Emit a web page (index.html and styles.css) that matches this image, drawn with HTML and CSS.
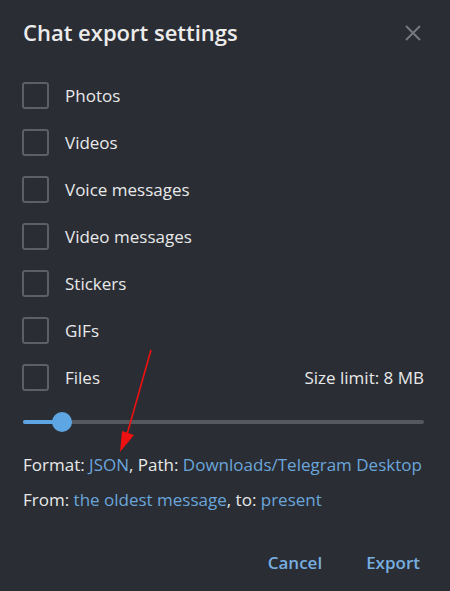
FILE: index.html
```html
<!DOCTYPE html>
<html>
<head>
<meta charset="utf-8">
<link rel="stylesheet" href="styles.css">
</head>
<body>
<div class="dialog">
  <div class="header">
    <div class="title">Chat export settings</div>
    <svg class="close" width="16" height="16" viewBox="0 0 16 16"><path d="M1 1L15 15M15 1L1 15" stroke="#75787d" stroke-width="2" fill="none"/></svg>
  </div>
  <div class="list">
    <div class="row"><span class="box"></span><span class="label">Photos</span></div>
    <div class="row"><span class="box"></span><span class="label">Videos</span></div>
    <div class="row"><span class="box"></span><span class="label">Voice messages</span></div>
    <div class="row"><span class="box"></span><span class="label">Video messages</span></div>
    <div class="row"><span class="box"></span><span class="label">Stickers</span></div>
    <div class="row"><span class="box"></span><span class="label">GIFs</span></div>
    <div class="row"><span class="box"></span><span class="label">Files</span><span class="limit">Size limit: 8 MB</span></div>
  </div>
  <div class="slider">
    <div class="track"><div class="fill"></div><div class="thumb"></div></div>
  </div>
  <div class="info first">Format: <span class="link">JSON</span>, Path: <span class="link">Downloads/Telegram Desktop</span></div>
  <div class="info">From: <span class="link">the oldest message</span>, to: <span class="link">present</span></div>
  <div class="buttons">
    <span class="btn">Cancel</span>
    <span class="btn">Export</span>
  </div>
  <svg class="arrow" width="450" height="591" viewBox="0 0 450 591">
    <line x1="151" y1="350" x2="126" y2="438" stroke="#ee1111" stroke-width="1.6"/>
    <polygon points="122,431 134,435 120,452" fill="#ee1111"/>
  </svg>
</div>
</body>
</html>
```
FILE: styles.css
```css
html, body {
  margin: 0;
  padding: 0;
  background: #2a2d33;
}
.dialog {
  position: relative;
  width: 450px;
  height: 591px;
  background: #2a2d33;
  font-family: "Open Sans", sans-serif;
  color: #e8e9ea;
  font-size: 17px;
  box-sizing: border-box;
  padding: 0 26px 0 22px;
}
.header {
  height: 72px;
  display: flex;
  align-items: flex-start;
  justify-content: space-between;
}
.title {
  font-size: 22px;
  font-weight: 600;
  margin-top: 17px;
  line-height: 30px;
  padding-left: 1px;
  color: #ececec;
}
.close {
  margin-top: 25px;
  margin-right: 3px;
}
.row {
  height: 47px;
  display: flex;
  align-items: center;
}
.box {
  width: 27px;
  height: 27px;
  box-sizing: border-box;
  border: 2px solid #5c5f64;
  border-radius: 3px;
  flex: none;
}
.label {
  margin-left: 16px;
  line-height: 22px;
}
.limit {
  margin-left: auto;
  line-height: 22px;
}
.slider {
  height: 40px;
  display: flex;
  align-items: center;
  padding-left: 1px;
  margin-top: 1px;
}
.track {
  position: relative;
  flex: 1;
  height: 4px;
  border-radius: 2px;
  background: #55585d;
}
.fill {
  width: 40px;
  height: 4px;
  border-radius: 2px;
  background: #5ea5e3;
}
.thumb {
  position: absolute;
  left: 29px;
  top: -8px;
  width: 20px;
  height: 20px;
  border-radius: 50%;
  background: #5ea5e3;
}
.info {
  line-height: 22px;
  padding-left: 1px;
}
.info.first {
  margin-top: 12px;
}
.info + .info {
  margin-top: 13px;
}
.link {
  color: #6aa6dc;
}
.buttons {
  display: flex;
  justify-content: flex-end;
  gap: 44px;
  margin-top: 41px;
  padding-right: 4px;
}
.btn {
  color: #77aee0;
  font-weight: 600;
  line-height: 22px;
}
.arrow {
  position: absolute;
  left: 0;
  top: 0;
  pointer-events: none;
}
```
